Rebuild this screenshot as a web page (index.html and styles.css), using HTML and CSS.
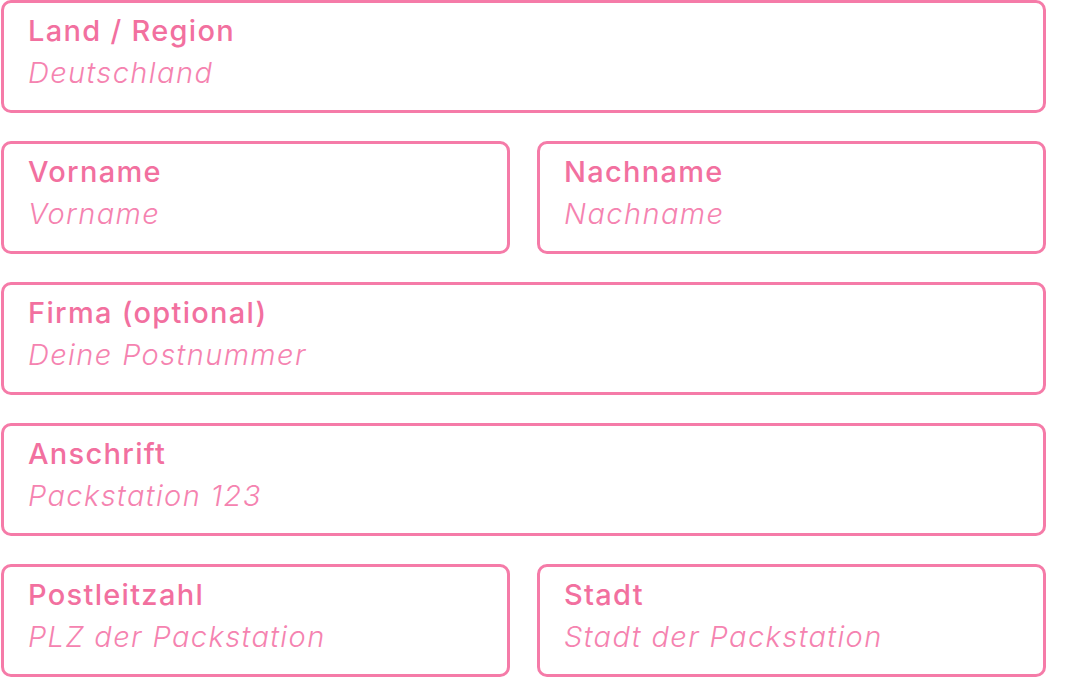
FILE: index.html
```html
<!DOCTYPE html>
<html lang="de">
<head>
    <meta charset="UTF-8">
    <meta name="viewport" content="width=device-width, initial-scale=1.0">
    <title>Lieferadresse</title>
    <link rel="stylesheet" href="styles.css">
</head>
<body>
    <form class="address-form">
        <div class="row">
            <label class="field">
                <span class="field-label">Land / Region</span>
                <input type="text" placeholder="Deutschland">
            </label>
        </div>
        <div class="row two">
            <label class="field">
                <span class="field-label">Vorname</span>
                <input type="text" placeholder="Vorname">
            </label>
            <label class="field">
                <span class="field-label">Nachname</span>
                <input type="text" placeholder="Nachname">
            </label>
        </div>
        <div class="row">
            <label class="field">
                <span class="field-label">Firma (optional)</span>
                <input type="text" placeholder="Deine Postnummer">
            </label>
        </div>
        <div class="row">
            <label class="field">
                <span class="field-label">Anschrift</span>
                <input type="text" placeholder="Packstation 123">
            </label>
        </div>
        <div class="row two">
            <label class="field">
                <span class="field-label">Postleitzahl</span>
                <input type="text" placeholder="PLZ der Packstation">
            </label>
            <label class="field">
                <span class="field-label">Stadt</span>
                <input type="text" placeholder="Stadt der Packstation">
            </label>
        </div>
    </form>
</body>
</html>
```

FILE: styles.css
```css
body {
    margin: 0;
    padding: 0;
    background-color: #fff;
    font-family: Inter, "Open Sans", Arial, sans-serif;
}
.address-form {
    width: 1045px;
    padding-left: 1px;
    display: flex;
    flex-direction: column;
    gap: 28px;
}
.row {
    display: grid;
    grid-template-columns: 1fr;
}
.row.two {
    grid-template-columns: 1fr 1fr;
    column-gap: 27px;
}
.field {
    min-width: 0;
    height: 113px;
    box-sizing: border-box;
    border: 3px solid #f57ba8;
    border-radius: 10px;
    padding: 11px 24px 0;
    display: flex;
    flex-direction: column;
}
.field-label {
    color: #f2709f;
    font-size: 29px;
    font-weight: 500;
    line-height: 34px;
    letter-spacing: 1.3px;
}
.field input {
    border: none;
    outline: none;
    padding: 0;
    margin-top: 8px;
    font-family: inherit;
    font-size: 29px;
    font-style: italic;
    font-weight: 300;
    line-height: 34px;
    letter-spacing: 1.4px;
    color: #f583b0;
    background: transparent;
}
.field input::placeholder {
    color: #f583b0;
    opacity: 1;
}
```
